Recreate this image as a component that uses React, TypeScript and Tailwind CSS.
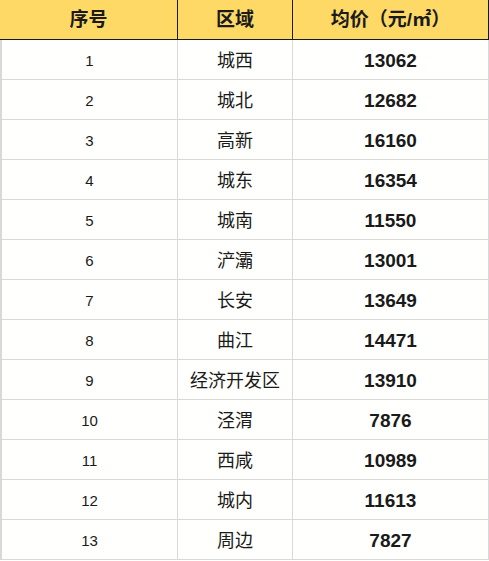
import React from "react";

const rows: [number, string, string][] = [
  [1, "城西", "13062"],
  [2, "城北", "12682"],
  [3, "高新", "16160"],
  [4, "城东", "16354"],
  [5, "城南", "11550"],
  [6, "浐灞", "13001"],
  [7, "长安", "13649"],
  [8, "曲江", "14471"],
  [9, "经济开发区", "13910"],
  [10, "泾渭", "7876"],
  [11, "西咸", "10989"],
  [12, "城内", "11613"],
  [13, "周边", "7827"],
];

const font = { fontFamily: '"Liberation Sans", "Noto Sans CJK SC", sans-serif' };

export default function App() {
  return (
    <div className="w-[489px] h-[561px] bg-[#fffffd] text-[#1a1a1a]" style={font}>
      <div className="grid grid-cols-[178px_115px_195px] h-[40px] bg-[#fed966] border-b border-r border-[#1a1a1a] font-bold text-[19px]">
        <div className="flex items-center justify-center pt-[2px] border-r border-[#1a1a1a]">序号</div>
        <div className="flex items-center justify-center pt-[2px] border-r border-[#1a1a1a]">区域</div>
        <div className="flex items-center justify-center pt-[2px]">均价（元/㎡）</div>
      </div>
      <div className="border-l-2 border-[#d9d9d9] w-[489px]">
        {rows.map(([n, area, price]) => (
          <div key={n} className="grid grid-cols-[176px_115px_196px] h-[40px] border-b border-[#d9d9d9]">
            <div className="flex items-center justify-center pt-[3px] border-r border-[#d9d9d9] text-[15px]">{n}</div>
            <div className="flex items-center justify-center pt-[3px] border-r border-[#d9d9d9] text-[18px]">{area}</div>
            <div className="flex items-center justify-center pt-[3px] border-r border-[#d9d9d9] font-bold text-[19px]">{price}</div>
          </div>
        ))}
      </div>
    </div>
  );
}
